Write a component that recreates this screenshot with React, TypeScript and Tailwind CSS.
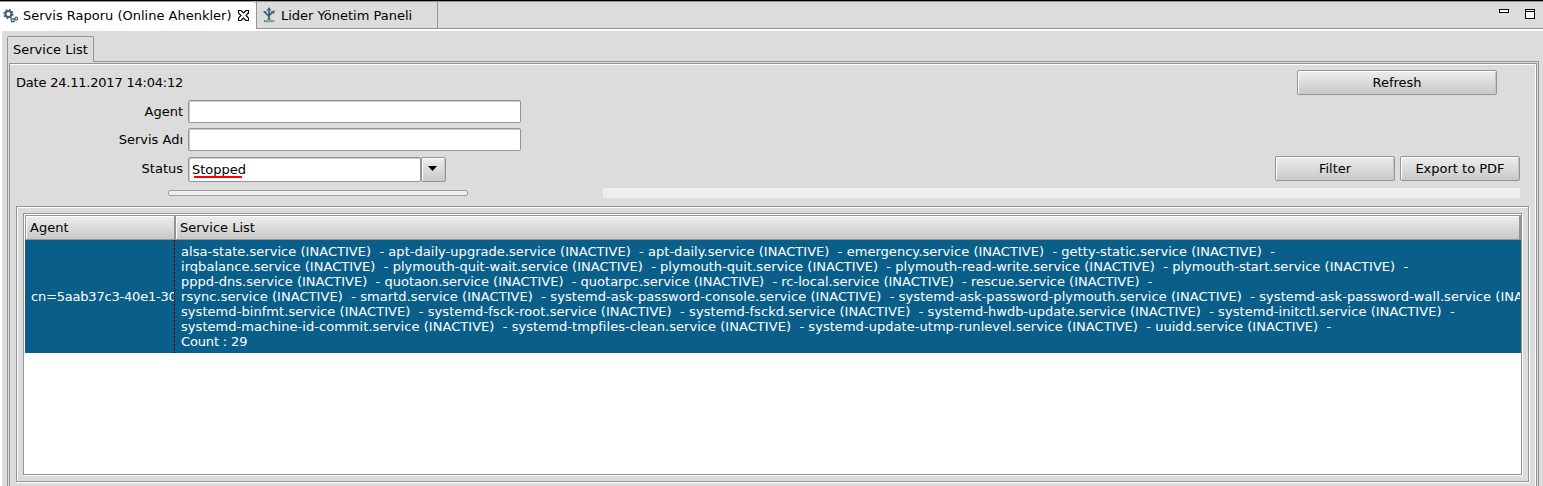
import React from "react";

const btn =
  "relative flex items-center justify-center rounded-[2px] border border-[#949494] bg-linear-to-b from-[#eeeeee] to-[#c8c8c8] shadow-[inset_1px_1px_0_#ffffff,inset_-1px_0_0_#c4c4c4]";

const field =
  "border border-[#949494] rounded-[2px] bg-white shadow-[inset_1px_1px_0_#c8c8c8]";

const lines: { text: string; tracking: string }[] = [
  {
    text: "alsa-state.service (INACTIVE)  - apt-daily-upgrade.service (INACTIVE)  - apt-daily.service (INACTIVE)  - emergency.service (INACTIVE)  - getty-static.service (INACTIVE)  -",
    tracking: "tracking-[0.036px]",
  },
  {
    text: "irqbalance.service (INACTIVE)  - plymouth-quit-wait.service (INACTIVE)  - plymouth-quit.service (INACTIVE)  - plymouth-read-write.service (INACTIVE)  - plymouth-start.service (INACTIVE)  -",
    tracking: "tracking-[0.037px]",
  },
  {
    text: "pppd-dns.service (INACTIVE)  - quotaon.service (INACTIVE)  - quotarpc.service (INACTIVE)  - rc-local.service (INACTIVE)  - rescue.service (INACTIVE)  -",
    tracking: "tracking-[0.007px]",
  },
  {
    text: "rsync.service (INACTIVE)  - smartd.service (INACTIVE)  - systemd-ask-password-console.service (INACTIVE)  - systemd-ask-password-plymouth.service (INACTIVE)  - systemd-ask-password-wall.service (INACTIVE)  -",
    tracking: "tracking-[0.062px]",
  },
  {
    text: "systemd-binfmt.service (INACTIVE)  - systemd-fsck-root.service (INACTIVE)  - systemd-fsckd.service (INACTIVE)  - systemd-hwdb-update.service (INACTIVE)  - systemd-initctl.service (INACTIVE)  -",
    tracking: "tracking-[0.058px]",
  },
  {
    text: "systemd-machine-id-commit.service (INACTIVE)  - systemd-tmpfiles-clean.service (INACTIVE)  - systemd-update-utmp-runlevel.service (INACTIVE)  - uuidd.service (INACTIVE)  -",
    tracking: "tracking-[0.048px]",
  },
  { text: "Count : 29", tracking: "tracking-[-0.15px]" },
];

function GearsIcon() {
  return (
    <svg width="16" height="16" viewBox="0 0 16 16" fill="none" stroke="#3f5f70">
      <circle cx="5.4" cy="6" r="3" strokeWidth="2" />
      <circle cx="5.4" cy="6" r="4.4" strokeWidth="1.5" strokeDasharray="1.73 1.73" />
      <circle cx="9.8" cy="12.2" r="1.6" strokeWidth="1.4" />
      <circle cx="13.3" cy="10.6" r="1.4" strokeWidth="1.2" />
    </svg>
  );
}

function LiderIcon() {
  return (
    <svg width="13" height="16" viewBox="0 0 13 16" fill="none" stroke="#436678">
      <path d="M6 12.5V2M6 9.3L2.2 5.6M6 8.6L9.6 5" strokeWidth="1.8" />
      <path d="M6 0L8.4 3.4H3.6ZM0 4L4 4.3L2.2 7ZM11.8 3.2L11.2 7L8 4.6ZM3.8 12.6L6 10L8.2 12.6Z" fill="#436678" stroke="none" />
      <path d="M1 14.2H11.2" strokeWidth="2.2" strokeDasharray="1.8 0.5" opacity="0.7" />
    </svg>
  );
}

function CloseIcon() {
  return (
    <svg width="11" height="11" viewBox="0 0 11 11" fill="#fff" stroke="#000" strokeWidth="1.15">
      <path d="M.5 .5H3L5.5 3L8 .5H10.5V3L8 5.5L10.5 8V10.5H8L5.5 8L3 10.5H.5V8L3 5.5L.5 3Z" />
    </svg>
  );
}

function EditorTabs() {
  return (
    <div className="flex h-[31px] border-t border-black">
      <div className="flex h-[30px] w-[256px] items-center rounded-tr-[3px] border-t border-[#949494] bg-white pb-[2px] pl-[3px]">
        <GearsIcon />
        <span className="ml-[4px] w-[215px]">Servis Raporu (Online Ahenkler)</span>
        <CloseIcon />
      </div>
      <div className="flex h-[30px] grow border-b-2 border-white">
        <div className="flex grow border-y border-l border-[#949494]">
          <div className="flex w-[181px] items-center border-r border-[#949494] pl-[6px]">
            <LiderIcon />
            <span className="ml-[5px]">Lider Yönetim Paneli</span>
          </div>
          <div className="flex grow justify-end gap-[16px] pt-[7px] pr-[8px]">
            <div className="h-[4px] w-[10px] border border-black bg-white" />
            <div className="h-[10px] w-[10px] border border-black bg-white pt-px">
              <div className="h-px bg-black" />
            </div>
          </div>
        </div>
      </div>
    </div>
  );
}

function FormRow({ label, className, children }: { label: string; className: string; children: React.ReactNode }) {
  return (
    <div className={"flex items-center " + className}>
      <span className="w-[173px] text-right">{label}</span>
      <div className="ml-[5px] flex">{children}</div>
    </div>
  );
}

function ServiceTable() {
  return (
    <div className="mt-[8px] ml-[6px] h-[276px] w-[1513px] border border-[#949494] p-[6px] shadow-[inset_1px_1px_0_#fff,1px_1px_0_#fff]">
      <div className="h-[262px] w-[1499px] border border-[#949494] bg-white pt-px pl-px shadow-[1px_1px_0_#fff]">
        <div className="flex h-[25px] w-[1496px] border-y border-l border-[#949494]">
          <div className="w-[148px] border-l border-white bg-linear-to-b from-[#eeeeee] to-[#c8c8c8] pl-[3px] leading-[24px] shadow-[inset_0_1px_0_#fff]">
            Agent
          </div>
          <div className="w-[2px] bg-[#949494]" />
          <div className="grow border-r-2 border-l border-l-white border-r-[#949494] bg-linear-to-b from-[#eeeeee] to-[#c8c8c8] pl-[3px] leading-[24px] shadow-[inset_0_1px_0_#fff]">
            Service List
          </div>
        </div>
        <div className="flex h-[113px] w-[1496px] bg-[#0a5f8a] text-white">
          <div className="flex w-[149px] items-center overflow-hidden pl-[6px] tracking-[-0.2px] whitespace-pre">
            cn=5aab37c3-40e1-30
          </div>
          <div className="w-px bg-[repeating-linear-gradient(to_bottom,#000_0,#000_1px,transparent_1px,transparent_2px)]" />
          <div className="w-[1345px] overflow-hidden pt-[4px] pl-[6px] leading-[15px] whitespace-pre">
            {lines.map((l) => (
              <div key={l.text} className={l.tracking}>
                {l.text}
              </div>
            ))}
          </div>
        </div>
      </div>
    </div>
  );
}

export default function App() {
  return (
    <div className="h-[486px] w-[1543px] overflow-hidden bg-[#dcdcdc] font-['DejaVu_Sans',sans-serif] text-[13px] leading-[15px] text-black">
      <EditorTabs />
      <div className="flex h-[455px] flex-col border-l-2 border-white pt-[5px] pl-[5px]">
        <div className="flex h-[26px] shrink-0">
          <div className="w-[87px] rounded-t-[2px] border border-b-0 border-[#949494] pt-[5px] pl-[5px] whitespace-nowrap">Service List</div>
          <div className="w-[1445px] border-b border-[#949494]" />
        </div>
        <div className="h-[424px] w-[1532px] shrink-0 border-x border-[#949494] px-px pt-px">
          <div className="h-[423px] border border-b-0 border-[#949494] shadow-[inset_-1px_1px_0_#fff]">
            <div className="flex h-[32px] items-start justify-between pt-[6px] pr-[39px] pl-[6px]">
              <span className="pt-[5px] tracking-[-0.21px]">Date 24.11.2017 14:04:12</span>
              <button className={btn + " h-[25px] w-[200px]"}>Refresh</button>
            </div>
            <FormRow label="Agent" className="mt-[4px] h-[23px]">
              <div className={field + " h-[23px] w-[333px]"} />
            </FormRow>
            <FormRow label="Servis Adı" className="mt-[5px] h-[23px]">
              <div className={field + " h-[23px] w-[333px]"} />
            </FormRow>
            <div className="mt-[5px] flex h-[25px] justify-between pr-[16px]">
              <FormRow label="Status" className="h-[25px]">
                <div className={field + " relative mt-px -mb-px h-[25px] w-[233px] pt-[4px] pl-[3px]"}>
                  Stopped
                  <div className="absolute top-[18px] left-[5px] h-[2px] w-[48px] bg-[#ff0000]" />
                </div>
                <div className={btn + " mt-px -mb-px h-[25px] w-[25px]"}>
                  <svg width="9" height="5" viewBox="0 0 9 5" className="mr-[2px] mb-[2px]">
                    <path d="M0 0H9L4.5 5Z" fill="#000" />
                  </svg>
                </div>
              </FormRow>
              <div className="flex gap-[5px]">
                <button className={btn + " h-[25px] w-[120px]"}>Filter</button>
                <button className={btn + " h-[25px] w-[120px]"}>Export to PDF</button>
              </div>
            </div>
            <div className="mt-[7px] flex h-[10px] items-center pl-[158px]">
              <div className="h-[6px] w-[300px] rounded-[2px] border border-[#a0a0a0] bg-[#eeeeee]" />
              <div className="ml-[135px] h-[10px] w-[917px] bg-[#eeeeee]" />
            </div>
            <ServiceTable />
          </div>
        </div>
      </div>
    </div>
  );
}
